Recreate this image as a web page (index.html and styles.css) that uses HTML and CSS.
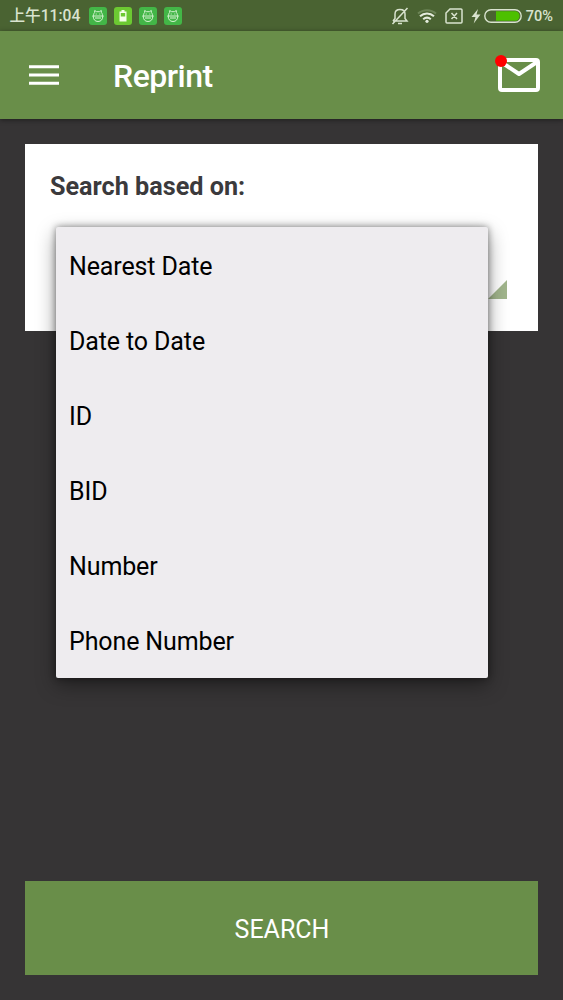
FILE: index.html
```html
<!DOCTYPE html>
<html lang="en">
<head>
<meta charset="utf-8">
<title>Reprint</title>
<link rel="stylesheet" href="styles.css">
</head>
<body>
<svg width="0" height="0" class="defs" aria-hidden="true">
  <symbol id="robot" viewBox="0 0 18 18">
    <path d="M4.500 8.800C4.500 7 5 6.200 5.600 5.600L5.700 3.500L7.600 4.700H10.400L12.300 3.500L12.400 5.600C13 6.200 13.500 7 13.500 8.800M3.300 9H14.700M4.200 9C4.200 12.500 6 14.500 9 14.500S13.800 12.500 13.800 9M6.700 7H7.700M10.300 7H11.300M6 11H12" fill="none" stroke="#d5f3d0" stroke-width="1"/>
  </symbol>
</svg>
<div class="screen">
  <div class="status">
    <span class="time">上午11:04</span>
    <div class="notes">
      <svg class="note"><use href="#robot"/></svg>
      <svg class="note note-battery" viewBox="0 0 18 18"><path d="M7.500 3H10.500V4.500H12.500V14.500H5.500V4.500H7.500Z" fill="#f4ffe9"/><path d="M6.800 6H11.200V9.500H6.800Z" fill="#6cc932"/></svg>
      <svg class="note"><use href="#robot"/></svg>
      <svg class="note"><use href="#robot"/></svg>
    </div>
    <div class="system">
      <svg width="18" height="20" viewBox="0 0 18 20" fill="none" stroke="#d9e3cf" stroke-width="1.500"><path d="M2 15H16L14 12.500V8C14 5 12 3.500 9 3.500S4 5 4 8V12.500L2 15M7 17.500H11M1.500 18L16.500 2"/></svg>
      <svg class="wifi" width="20" height="16" viewBox="0 0 20 16" fill="none" stroke-width="2"><path d="M1 5.500C6 1 14 1 19 5.500" stroke="#6c8456"/><path d="M3 8.300C7 4.500 13 4.500 17 8.300M6.200 11.300C8.500 9.300 11.500 9.300 13.800 11.300" stroke="#e4ecdd"/><circle cx="10" cy="13.300" r="1.600" fill="#e4ecdd"/></svg>
      <svg class="sim" width="18" height="16" viewBox="0 0 18 16" fill="none" stroke="#d9e3cf" stroke-width="1.500"><path d="M5 1H16Q17 1 17 2V14Q17 15 16 15H2Q1 15 1 14V5ZM6.500 5L12 11M12 5L6.500 11"/></svg>
      <svg class="bolt" width="10" height="16" viewBox="0 0 10 16"><path d="M7 1L0.500 9H4.500L2.700 15.500L9.500 6.500H5.500Z" fill="#d9e3cf"/></svg>
      <svg class="battery" width="38" height="14" viewBox="0 0 38 14"><rect x=".8" y=".8" width="36.400" height="12.400" rx="6.200" fill="none" stroke="#d9e3cf" stroke-width="1.400"/><path d="M12 2.200H31C37 2.200 37 11.800 31 11.800H12Z" fill="#4dc000"/></svg>
      <span class="percent">70%</span>
    </div>
  </div>
  <header class="appbar">
    <svg width="30" height="20" viewBox="0 0 30 20"><path d="M0 1.700H30M0 10H30M0 18.300H30" stroke="#fff" stroke-width="3"/></svg>
    <h1>Reprint</h1>
    <div class="mail">
      <svg width="42" height="34" viewBox="0 0 42 34" fill="none" stroke="#fff" stroke-width="4" stroke-linejoin="round"><rect x="2" y="2" width="38" height="30" rx="2"/><path d="M3 4L21 16L39 4"/></svg>
      <i class="dot"></i>
    </div>
  </header>
  <main>
    <section class="card">
      <h2>Search based on:</h2>
      <i class="caret"></i>
      <ul class="menu">
        <li>Nearest Date</li>
        <li>Date to Date</li>
        <li>ID</li>
        <li>BID</li>
        <li>Number</li>
        <li>Phone Number</li>
      </ul>
    </section>
    <button class="search">SEARCH</button>
  </main>
</div>
</body>
</html>
```
FILE: styles.css
```css
* { box-sizing: border-box; margin: 0; padding: 0; }
body { font-family: Roboto, "Noto Sans CJK SC", sans-serif; background: #363435; }
svg { display: block; flex: none; }
.defs { position: absolute; }
.screen { height: 1000px; display: flex; flex-direction: column; overflow: hidden; }
.status { height: 31px; background: #4a6332; display: flex; align-items: center; padding: 0 10px 0 9.500px; color: #d9e3cf; }
.time { width: 79px; font-size: 15.600px; font-weight: 500; line-height: 30px; white-space: nowrap; }
.notes { display: flex; gap: 7px; }
.note { width: 18px; height: 18px; border-radius: 3px; background: #43b647; }
.note-battery { background: #6cc932; }
.system { display: flex; align-items: center; margin-left: auto; }
.wifi { margin-left: 8px; }
.sim { margin-left: 8px; }
.bolt { margin-left: 8px; }
.battery { margin-left: 3px; }
.percent { font-size: 14.500px; font-weight: 500; margin-left: 4px; padding-top: 1px; }
.appbar { height: 88px; background: #698e49; display: flex; align-items: center; padding: 0 23px 0 29px; box-shadow: 0 1px 5px rgba(0,0,0,.45); z-index: 1; }
.appbar h1 { color: #fff; font-size: 32px; font-weight: 500; letter-spacing: -.5px; margin-left: 54px; line-height: 40px; padding-top: 2px; }
.mail { position: relative; margin-left: auto; }
.dot { position: absolute; left: -3px; top: -3px; width: 12px; height: 12px; border-radius: 50%; background: #f00; }
main { flex: 1; padding: 25px; display: flex; flex-direction: column; justify-content: space-between; }
.card { position: relative; height: 187px; background: #fff; padding: 28px 31px 32px 25px; display: flex; flex-direction: column; justify-content: space-between; }
.card h2 { font-size: 25.200px; line-height: 30px; font-weight: 700; color: #3b3a3c; }
.caret { align-self: flex-end; width: 19px; height: 19px; background: #a1b58c; clip-path: polygon(100% 0, 100% 100%, 0 100%); }
.menu { position: absolute; left: 31px; top: 83px; width: 432px; height: 451px; list-style: none; background: #eeecef; border-radius: 2px; box-shadow: 0 7px 20px rgba(0,0,0,.4), 0 0 7px rgba(0,0,0,.45); }
.menu li { height: 75px; padding: 2px 13px 0; font-size: 25px; letter-spacing: -.12px; line-height: 75px; color: #000; }
.search { height: 94px; border: 0; background: #698e49; color: #fff; font: 400 25px/30px Roboto, sans-serif; padding: 3px 0 0 1px; }
```
